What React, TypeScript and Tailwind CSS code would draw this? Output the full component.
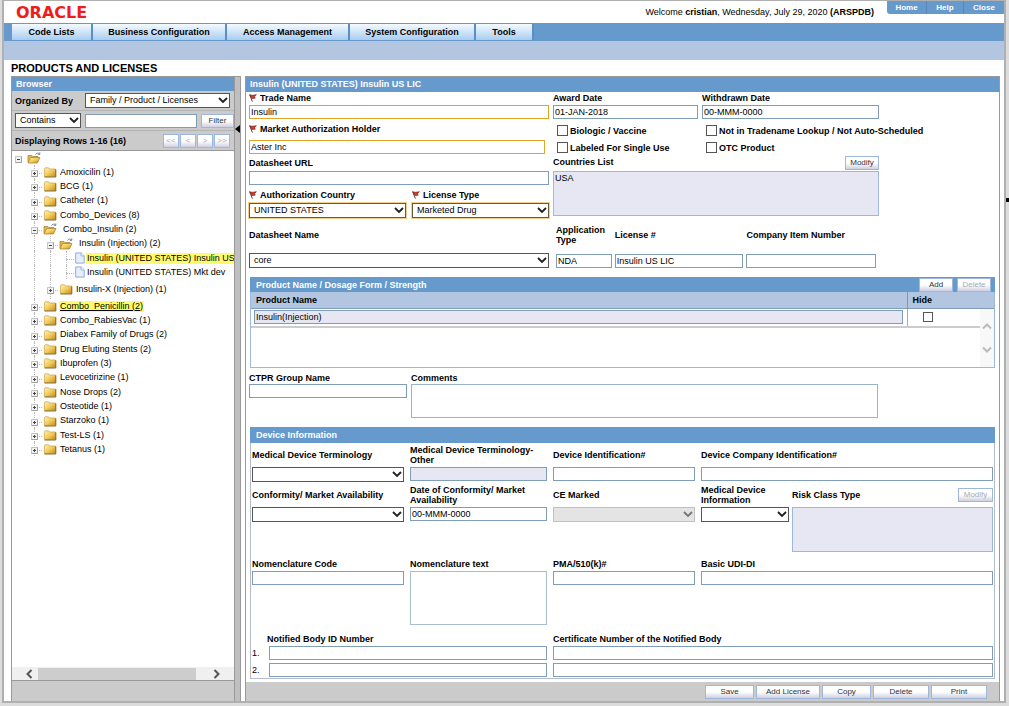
import React from 'react';

const MENU_TABS = [
  { label: 'Code Lists', width: 'w-[81px]' },
  { label: 'Business Configuration', width: 'w-[134px]' },
  { label: 'Access Management', width: 'w-[123px]' },
  { label: 'System Configuration', width: 'w-[126px]' },
  { label: 'Tools', width: 'w-[58px]' },
];

type NodeKind = 'closed' | 'open' | 'doc';

interface TreeItem {
  label: string;
  level: number;
  kind: NodeKind;
  selected?: boolean;
  active?: boolean;
  tall?: boolean;
}

const TREE_DATA: TreeItem[] = [
  { label: 'Amoxicilin (1)', level: 1, kind: 'closed' },
  { label: 'BCG (1)', level: 1, kind: 'closed' },
  { label: 'Catheter (1)', level: 1, kind: 'closed' },
  { label: 'Combo_Devices (8)', level: 1, kind: 'closed' },
  { label: 'Combo_Insulin (2)', level: 1, kind: 'open' },
  { label: 'Insulin (Injection) (2)', level: 2, kind: 'open' },
  { label: 'Insulin (UNITED STATES) Insulin US', level: 3, kind: 'doc', selected: true },
  { label: 'Insulin (UNITED STATES) Mkt dev', level: 3, kind: 'doc' },
  { label: 'Insulin-X (Injection) (1)', level: 2, kind: 'closed', tall: true },
  { label: 'Combo_Penicillin (2)', level: 1, kind: 'closed', active: true },
  { label: 'Combo_RabiesVac (1)', level: 1, kind: 'closed' },
  { label: 'Diabex Family of Drugs (2)', level: 1, kind: 'closed' },
  { label: 'Drug Eluting Stents (2)', level: 1, kind: 'closed' },
  { label: 'Ibuprofen (3)', level: 1, kind: 'closed' },
  { label: 'Levocetirizine (1)', level: 1, kind: 'closed' },
  { label: 'Nose Drops (2)', level: 1, kind: 'closed' },
  { label: 'Osteotide (1)', level: 1, kind: 'closed' },
  { label: 'Starzoko (1)', level: 1, kind: 'closed' },
  { label: 'Test-LS (1)', level: 1, kind: 'closed' },
  { label: 'Tetanus (1)', level: 1, kind: 'closed' },
];

const FolderIcon: React.FC<{ open?: boolean }> = ({ open }) => (
  <svg className="w-[14px] h-[12px] shrink-0" viewBox="0 0 14 12" aria-hidden="true">
    <defs>
      <linearGradient id="folder" x1="0" y1="0" x2="1" y2="1">
        <stop offset="0" stopColor="#fff3b8" />
        <stop offset="0.5" stopColor="#f2cc5e" />
        <stop offset="1" stopColor="#c08a16" />
      </linearGradient>
    </defs>
    {open ? (
      <>
        <path d="M1 10.5V3.5h4l1 1h5v2" fill="#e2b84a" stroke="#a87f26" strokeWidth="0.7" />
        <path d="M1 11l2.6-5.5h9.4L10.4 11z" fill="url(#folder)" stroke="#a87f26" strokeWidth="0.7" />
        <path d="M8.5 2.5c1-1.6 2.6-1.8 4-.6M12.8.4v2h-2" fill="none" stroke="#5b6b86" strokeWidth="0.8" />
      </>
    ) : (
      <>
        <path d="M1.4 10.6V2.6l.6-.8h3.6l1 1.2h6v7.6z" fill="url(#folder)" stroke="#c9a044" strokeWidth="0.7" />
        <path d="M1.5 11h11.3V3.4" fill="none" stroke="#6d5110" strokeWidth="0.8" />
      </>
    )}
  </svg>
);

const DocIcon: React.FC = () => (
  <svg className="w-[10px] h-[12px] shrink-0" viewBox="0 0 10 12" aria-hidden="true">
    <path d="M.7.9h5.4L9.2 3.8v7.3H.7z" fill="#e4eefc" stroke="#8ba4cf" strokeWidth="0.9" />
    <path d="M6 .9v3h3.2" fill="#fff" stroke="#8ba4cf" strokeWidth="0.8" />
  </svg>
);

const FlagIcon: React.FC = () => (
  <svg className="w-2 h-2 shrink-0" viewBox="0 0 8 8" aria-hidden="true">
    <path d="M.6.5L3.4 7.6" stroke="#333" strokeWidth="0.9" />
    <path d="M.8.8l2.4.5L7.4.7 5.6 2.6l.6 1.6-3.5.3z" fill="#d8392b" stroke="#6b1f18" strokeWidth="0.6" />
  </svg>
);

const Toggle: React.FC<{ open?: boolean }> = ({ open }) => (
  <svg className="absolute left-[4px] top-1/2 -mt-[2px] w-[7px] h-[7px]" viewBox="0 0 7 7" aria-hidden="true">
    <path d="M.5.5h6v6h-6z" fill="#f2f2f2" stroke="#c4c4c4" />
    <path d="M.5 6.5h6v-6" fill="none" stroke="#a0a0a0" />
    <path d={open ? 'M2 3.5h3' : 'M2 3.5h3M3.5 2v3'} stroke="#444" />
  </svg>
);

const Guide: React.FC<{ blank?: boolean; children?: React.ReactNode; elbow?: boolean }> = ({ blank, children, elbow }) => (
  <span className="relative w-4 self-stretch shrink-0">
    {!blank && <span className="absolute left-[7px] inset-y-0 border-l border-dotted border-[#bbb]" />}
    {elbow && <span className="absolute left-[7px] right-px top-1/2 mt-px border-t border-dotted border-[#bbb]" />}
    {children}
  </span>
);

const LABEL_GAP: Record<NodeKind, string> = {
  closed: 'ml-[2px] px-px',
  open: 'ml-[6px]',
  doc: 'ml-px pl-px',
};

const TreeRow: React.FC<{ item: TreeItem }> = ({ item }) => (
  <li className={item.tall ? 'h-5 flex items-center' : 'h-[14px] nth-[3n]:h-[15px] flex items-center'}>
    <Guide blank />
    {item.level > 1 && <Guide />}
    {item.level > 2 && <Guide />}
    <Guide elbow>{item.kind !== 'doc' && <Toggle open={item.kind === 'open'} />}</Guide>
    {item.kind === 'doc' ? <DocIcon /> : <FolderIcon open={item.kind === 'open'} />}
    <a
      href="#"
      className={`whitespace-nowrap leading-[11px] ${LABEL_GAP[item.kind]} ${item.selected ? 'bg-[#fffb6b]' : ''} ${
        item.active ? 'bg-[#fffb6b] underline' : ''
      }`}
    >
      {item.label}
    </a>
  </li>
);

const Button: React.FC<{ children: React.ReactNode; className?: string; disabled?: boolean }> = ({
  children,
  className = '',
  disabled,
}) => (
  <button
    type="button"
    disabled={disabled}
    className={`h-[14px] shrink-0 border border-[#9db8dc] bg-linear-to-b from-white from-50% to-[#cfcfe2] text-[8px] leading-[12px] text-[#333] disabled:text-[#aaa] ${className}`}
  >
    {children}
  </button>
);

const Label: React.FC<{ htmlFor: string; children: React.ReactNode; flag?: boolean; className?: string }> = ({
  htmlFor,
  children,
  flag,
  className = '',
}) => (
  <label htmlFor={htmlFor} className={`flex items-center gap-[3px] font-bold leading-[10px] ${className}`}>
    {flag && <FlagIcon />}
    <span>{children}</span>
  </label>
);

const Input: React.FC<{ id: string; value?: string; className?: string; required?: boolean; label?: string }> = ({
  id,
  value,
  className = 'bg-white',
  required,
  label,
}) => (
  <input
    id={id}
    type="text"
    aria-label={label}
    defaultValue={value}
    className={`block w-full min-w-0 h-[14px] border pl-px ${required ? 'border-[#e0a526]' : 'border-[#7f9db9]'} ${className}`}
  />
);

const Select: React.FC<{
  id: string;
  value?: string;
  label?: string;
  className?: string;
  disabled?: boolean;
  required?: boolean;
}> = ({ id, value = '', label, className = '', disabled, required }) => (
  <div className={`relative min-w-0 ${className}`}>
    <select
      id={id}
      aria-label={label}
      disabled={disabled}
      defaultValue={value}
      className={`block w-full h-[15px] appearance-none border bg-white pl-1 leading-[13px] disabled:bg-[#e4e4e4] disabled:border-[#c0c0c0] disabled:opacity-100 ${
        required ? 'border-[#6b5a36] outline outline-[#f3cf8c]' : 'border-[#555]'
      }`}
    >
      <option>{value}</option>
    </select>
    <svg className="pointer-events-none absolute right-[2px] top-1 w-[10px] h-[7px]" viewBox="0 0 10 7" aria-hidden="true">
      <path d="M1 1l4 4 4-4" fill="none" stroke={disabled ? '#777' : '#222'} strokeWidth="1.9" />
    </svg>
  </div>
);

const Check: React.FC<{ id: string; children: React.ReactNode }> = ({ id, children }) => (
  <div className="flex min-w-0 items-center gap-[2px] h-[17px]">
    <input id={id} type="checkbox" className="appearance-none size-[11px] shrink-0 border border-[#555] bg-white checked:bg-[#555]" />
    <label htmlFor={id} className="font-bold whitespace-nowrap">
      {children}
    </label>
  </div>
);

const Header: React.FC = () => (
  <header>
    <div className="flex items-start h-[22px]">
      <div className="ml-3 mt-[3px] font-['DejaVu_Sans',sans-serif] text-[16px] leading-[18px] font-bold text-[#f01c1c]">
        ORACLE
      </div>
      <p className="ml-auto mr-[13px] mt-1 leading-[14px]">
        Welcome <b>cristian</b>, Wednesday, July 29, 2020 <b>(ARSPDB)</b>
      </p>
      <nav className="flex h-[13px] rounded-bl-[3px] bg-[#6699cc] text-[8px] leading-[14px] font-bold text-white text-center divide-x divide-[#5588bb]">
        <a href="#" className="w-[40px]">Home</a>
        <a href="#" className="w-[37px]">Help</a>
        <a href="#" className="w-[40px]">Close</a>
      </nav>
    </div>
    <nav className="flex h-[18px] bg-[#6699cc] pl-2 pt-px pb-px font-bold text-center leading-[17px]">
      {MENU_TABS.map((tab) => (
        <a
          key={tab.label}
          href="#"
          className={`${tab.width} border-r-2 border-[#5b8fc4] bg-linear-to-b from-[#f4faff] to-[#a9cdf0]`}
        >
          {tab.label}
        </a>
      ))}
    </nav>
    <div className="h-[19px] bg-[#b2c6e2]" />
  </header>
);

const Browser: React.FC = () => (
  <aside className="flex w-[223px] shrink-0 flex-col border-t border-l border-[#999] bg-[#cbcbcb]">
    <h2 className="h-[14px] shrink-0 bg-[#6699cc] pl-1 font-bold leading-[14px] text-white">Browser</h2>
    <div className="flex h-5 shrink-0 items-center border-b border-[#b4b4b4] pl-[3px] pr-1">
      <label htmlFor="organized" className="w-[70px] font-bold">
        Organized By
      </label>
      <Select id="organized" value="Family / Product / Licenses" className="flex-1" />
    </div>
    <div className="flex h-5 shrink-0 items-center gap-1 border-b border-[#b4b4b4] pl-[3px]">
      <Select id="match" value="Contains" label="Match mode" className="w-[66px] shrink-0" />
      <Input id="filter" label="Filter text" />
      <Button className="w-[33px]">Filter</Button>
    </div>
    <div className="flex h-5 shrink-0 items-center gap-px border-b border-[#999] pl-[3px] pr-1">
      <span className="flex-1 font-bold">Displaying Rows 1-16 (16)</span>
      {['<<', '<', '>', '>>'].map((label) => (
        <Button key={label} disabled className="w-4">
          {label}
        </Button>
      ))}
    </div>
    <div className="-ml-px flex-1 overflow-hidden border-l border-[#999] bg-white">
      <div className="-ml-px flex h-[14px] items-center">
        <span className="relative w-4 self-stretch">
          <Toggle open />
        </span>
        <FolderIcon open />
      </div>
      <ul className="-ml-px">
        {TREE_DATA.map((item) => (
          <TreeRow key={item.label} item={item} />
        ))}
      </ul>
    </div>
    <div className="flex h-[14px] shrink-0 items-center border-b border-[#999] bg-[#f0f0f0]">
      <svg className="ml-3 mr-1 w-[10px] h-[10px]" viewBox="0 0 10 10" aria-hidden="true">
        <path d="M7.5 1L3.5 5l4 4" fill="none" stroke="#555" strokeWidth="2" />
      </svg>
      <div className="h-3 flex-1 bg-[#cdcdcd]" />
      <svg className="ml-4 mr-3 w-[10px] h-[10px]" viewBox="0 0 10 10" aria-hidden="true">
        <path d="M2.5 1l4 4-4 4" fill="none" stroke="#555" strokeWidth="2" />
      </svg>
    </div>
    <div className="h-5 shrink-0 bg-[#cbcbcb]" />
  </aside>
);

const LicenseFields: React.FC = () => (
  <div className="grid grid-cols-[300fr_326fr_112fr] gap-x-1 pl-[3px] pr-1">
    <div className="min-w-0">
      <Label htmlFor="trade" flag className="h-[13px] pb-[2px]">Trade Name</Label>
      <Input id="trade" value="Insulin" required />
      <Label htmlFor="holder" flag className="mt-1 h-[13px] pb-[2px]">Market Authorization Holder</Label>
      <div className="pt-1 pr-1">
        <Input id="holder" value="Aster Inc" required />
      </div>
      <Label htmlFor="url" className="mt-[3px] h-[14px] pb-[2px]">Datasheet URL</Label>
      <Input id="url" />
      <div className="mt-1 grid grid-cols-[157fr_137fr] gap-x-[6px]">
        <Label htmlFor="country" flag className="h-[14px] pb-[2px]">Authorization Country</Label>
        <Label htmlFor="type" flag className="h-[14px] pb-[2px]">License Type</Label>
        <Select id="country" value="UNITED STATES" required />
        <Select id="type" value="Marketed Drug" required />
      </div>
      <Label htmlFor="datasheet" className="mt-3 h-[10px]">Datasheet Name</Label>
      <Select id="datasheet" value="core" className="mt-[13px]" />
    </div>
    <div className="min-w-0">
      <div className="grid grid-cols-[145fr_177fr] gap-x-1">
        <Label htmlFor="award" className="h-[13px] pb-[2px]">Award Date</Label>
        <Label htmlFor="withdrawn" className="h-[13px] pb-[2px]">Withdrawn Date</Label>
        <Input id="award" value="01-JAN-2018" />
        <Input id="withdrawn" value="00-MMM-0000" />
      </div>
      <div className="mt-[3px] grid grid-cols-[145fr_173fr] gap-x-1 pl-1">
        <Check id="biologic">Biologic / Vaccine</Check>
        <Check id="lookup">Not in Tradename Lookup / Not Auto-Scheduled</Check>
        <Check id="single">Labeled For Single Use</Check>
        <Check id="otc">OTC Product</Check>
      </div>
      <div className="flex h-[15px] items-start justify-between">
        <Label htmlFor="countries" className="h-[14px] pb-[2px]">Countries List</Label>
        <Button className="w-[34px]">Modify</Button>
      </div>
      <textarea
        id="countries"
        defaultValue="USA"
        className="block h-[45px] w-full resize-none border border-[#9db8dc] bg-[#e6e7f2] pl-px leading-[12px]"
      />
      <div className="mt-[9px] grid grid-cols-[56fr_129fr_130fr] items-center gap-x-[3px] gap-y-[9px] px-[3px]">
        <Label htmlFor="apptype">Application Type</Label>
        <Label htmlFor="license">License #</Label>
        <Label htmlFor="item">Company Item Number</Label>
        <Input id="apptype" value="NDA" />
        <Input id="license" value="Insulin US LIC" />
        <Input id="item" />
      </div>
    </div>
  </div>
);

const ProductTable: React.FC = () => (
  <section className="mx-1 mt-[9px]">
    <div className="flex h-[15px] items-center gap-1 bg-[#6699cc] pl-[6px] pr-1">
      <h3 className="flex-1 font-bold text-white">Product Name / Dosage Form / Strength</h3>
      <Button className="w-[34px]">Add</Button>
      <Button className="w-[34px]" disabled>Delete</Button>
    </div>
    <div className="relative h-[76px] border border-t-0 border-[#9db8dc]">
      <table className="w-full table-fixed border-collapse text-left">
        <thead>
          <tr className="h-4 border-b border-[#7f9db9] bg-[#b2c6e2]">
            <th className="border-r border-[#8095b5] pl-[5px] leading-[14px]">Product Name</th>
            <th className="w-[87px] pl-[5px] leading-[14px]">Hide</th>
          </tr>
        </thead>
        <tbody>
          <tr className="h-[19px] border-b-2 border-[#ccc]">
            <td className="border-r border-[#aaa] pl-[3px] pr-1">
              <Input id="product" value="Insulin(Injection)" label="Product Name" className="bg-[#e6e7f2]" />
            </td>
            <td className="pl-[15px]">
              <input
                type="checkbox"
                aria-label="Hide Insulin(Injection)"
                className="block appearance-none size-[10px] border border-[#555] bg-white"
              />
            </td>
          </tr>
        </tbody>
      </table>
      <div className="absolute right-0 bottom-0 top-[17px] flex w-[14px] flex-col items-center justify-center gap-4 bg-[#f8f8f8]">
        <svg className="w-[10px] h-2" viewBox="0 0 10 8" aria-hidden="true">
          <path d="M1 6.5l4-4 4 4" fill="none" stroke="#bbb" strokeWidth="2" />
        </svg>
        <svg className="w-[10px] h-2" viewBox="0 0 10 8" aria-hidden="true">
          <path d="M1 1.5l4 4 4-4" fill="none" stroke="#bbb" strokeWidth="2" />
        </svg>
      </div>
    </div>
  </section>
);

const DeviceInformation: React.FC = () => (
  <section className="mx-1 mt-[9px] border border-[#b4bccb]">
    <h3 className="-mx-px -mt-px h-[16px] bg-[#6699cc] pl-[6px] font-bold leading-[16px] text-white">Device Information</h3>
    <div className="grid grid-cols-[152fr_137fr_142fr_292fr] gap-x-[6px] px-px pb-px">
      <Label htmlFor="terminology" className="h-6">Medical Device Terminology</Label>
      <Label htmlFor="terminology-other" className="h-6">Medical Device Terminology- Other</Label>
      <Label htmlFor="device-id" className="h-6">Device Identification#</Label>
      <Label htmlFor="company-id" className="h-6">Device Company Identification#</Label>
      <Select id="terminology" />
      <Input id="terminology-other" className="bg-[#e6e7f2]" />
      <Input id="device-id" />
      <Input id="company-id" />

      <Label htmlFor="conformity" className="h-[25px]">Conformity/ Market Availability</Label>
      <Label htmlFor="conformity-date" className="h-[25px]">Date of Conformity/ Market Availability</Label>
      <Label htmlFor="ce" className="h-[25px]">CE Marked</Label>
      <div className="grid grid-cols-[88fr_201fr] gap-x-[3px]">
        <Label htmlFor="device-info">Medical Device Information</Label>
        <div className="flex items-center justify-between">
          <Label htmlFor="risk">Risk Class Type</Label>
          <Button className="w-[35px]" disabled>Modify</Button>
        </div>
      </div>
      <Select id="conformity" />
      <Input id="conformity-date" value="00-MMM-0000" />
      <Select id="ce" disabled />
      <div className="grid grid-cols-[88fr_201fr] gap-x-[3px]">
        <Select id="device-info" />
        <textarea id="risk" className="block h-[45px] w-full resize-none border border-[#9db8dc] bg-[#e6e7f2]" />
      </div>

      <Label htmlFor="code" className="mt-[5px] h-[14px]">Nomenclature Code</Label>
      <Label htmlFor="nomenclature" className="mt-[5px] h-[14px]">Nomenclature text</Label>
      <Label htmlFor="pma" className="mt-[5px] h-[14px]">PMA/510(k)#</Label>
      <Label htmlFor="udi" className="mt-[5px] h-[14px]">Basic UDI-DI</Label>
      <Input id="code" />
      <textarea id="nomenclature" className="block h-[54px] w-full resize-none border border-[#a9bccf]" />
      <Input id="pma" />
      <Input id="udi" />

      <Label htmlFor="body-1" className="col-span-2 mt-[6px] h-[15px] pl-[15px]">Notified Body ID Number</Label>
      <Label htmlFor="cert-1" className="col-span-2 mt-[6px] h-[15px]">Certificate Number of the Notified Body</Label>
      <div className="col-span-2 space-y-[3px]">
        {[1, 2].map((n) => (
          <div key={n} className="flex">
            <label htmlFor={`body-${n}`} className="w-[17px] shrink-0 leading-[14px]">{n}.</label>
            <Input id={`body-${n}`} />
          </div>
        ))}
      </div>
      <div className="col-span-2 space-y-[3px]">
        {[1, 2].map((n) => (
          <Input key={n} id={`cert-${n}`} label={`Certificate Number ${n}`} />
        ))}
      </div>
    </div>
  </section>
);

const LicensePanel: React.FC = () => (
  <main className="flex min-w-0 flex-1 flex-col border border-b-0 border-[#999]">
    <h2 className="h-[15px] bg-[#6699cc] pl-1 font-bold leading-[14px] text-white">Insulin (UNITED STATES) Insulin US LIC</h2>
    <LicenseFields />
    <ProductTable />
    <div className="mt-[3px] grid grid-cols-[158fr_467fr_113fr] gap-x-1 pl-[3px] pr-1">
      <div>
        <Label htmlFor="ctpr" className="h-[13px]">CTPR Group Name</Label>
        <Input id="ctpr" />
      </div>
      <div>
        <Label htmlFor="comments" className="h-[13px]">Comments</Label>
        <textarea id="comments" className="block h-[34px] w-full resize-none border border-[#9db3cb]" />
      </div>
    </div>
    <DeviceInformation />
    <div className="flex-1" />
    <footer className="flex h-[19px] items-center justify-end gap-[2px] bg-[#cbcbcb] pr-3">
      <Button className="w-[49px]">Save</Button>
      <Button className="w-[64px]">Add License</Button>
      <Button className="w-[49px]">Copy</Button>
      <Button className="w-[56px]">Delete</Button>
      <Button className="w-[56px]">Print</Button>
    </footer>
  </main>
);

const App: React.FC = () => {
  return (
    <div className="relative flex min-h-screen flex-col bg-[#dcdcdc] pb-[3px] pr-[3px] pl-[2px] font-['Liberation_Sans',Arial,sans-serif] text-[9px] leading-[12px] text-black">
      <div className="flex flex-1 flex-col border-t border-r-2 border-b-2 border-l-2 border-[#b0b0b0] bg-white">
        <Header />
        <h1 className="mt-px h-[15px] pl-[7px] text-[11px] font-bold leading-[14px]">PRODUCTS AND LICENSES</h1>
        <div className="flex flex-1 pl-[7px] pr-1">
          <Browser />
          <div className="mr-1 flex w-[7px] shrink-0 flex-col border-x border-t border-[#999] bg-[#bfbfbf]">
            <svg className="mt-[48px] -ml-px w-[6px] h-2" viewBox="0 0 6 8" aria-hidden="true">
              <path d="M6 0v8L1 4z" fill="#000" />
            </svg>
          </div>
          <LicensePanel />
        </div>
      </div>
      <div className="absolute right-0 top-[198px] h-1 w-[3px] bg-black" />
    </div>
  );
};

export default App;
